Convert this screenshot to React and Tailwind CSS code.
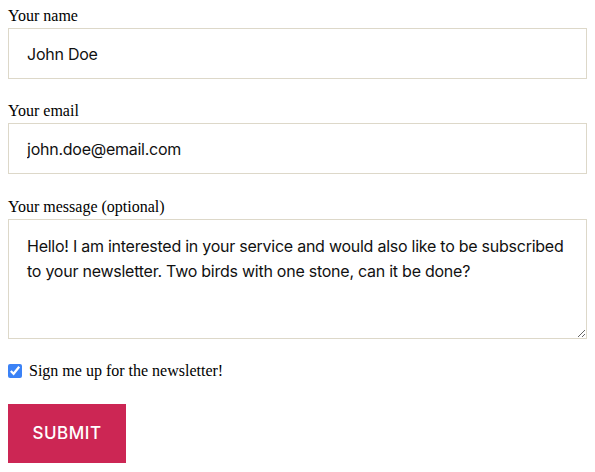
import { useState } from 'react'

const labelClass = "block font-['Liberation_Serif',serif] text-[16px] leading-[20px] text-black pt-[2px] mb-[2px]"
const fieldClass =
  "block w-full border border-[#ddd8c9] bg-white px-[18px] font-['Inter',sans-serif] text-[16px] tracking-[-0.25px] text-[#111] outline-none"

function App() {
  const [name, setName] = useState('John Doe')
  const [email, setEmail] = useState('john.doe@email.com')
  const [message, setMessage] = useState(
    'Hello! I am interested in your service and would also like to be subscribed to your newsletter. Two birds with one stone, can it be done?'
  )
  const [subscribed, setSubscribed] = useState(true)

  return (
    <form className="bg-white px-2 pt-1" onSubmit={(event) => event.preventDefault()}>
      <label className={labelClass} htmlFor="name">Your name</label>
      <input
        id="name"
        type="text"
        value={name}
        onChange={(event) => setName(event.target.value)}
        className={`${fieldClass} mb-5 h-[51px]`}
      />

      <label className={labelClass} htmlFor="email">Your email</label>
      <input
        id="email"
        type="email"
        value={email}
        onChange={(event) => setEmail(event.target.value)}
        className={`${fieldClass} mb-5 h-[51px]`}
      />

      <label className={`${labelClass} !pt-[3px]`} htmlFor="message">Your message (optional)</label>
      <textarea
        id="message"
        value={message}
        onChange={(event) => setMessage(event.target.value)}
        className={`${fieldClass} h-[120px] pt-[14px] leading-[25px]`}
      />

      <label className="mt-[22px] flex items-center gap-[7px] font-['Liberation_Serif',serif] text-[16px] leading-[20px] text-black">
        <input
          type="checkbox"
          checked={subscribed}
          onChange={(event) => setSubscribed(event.target.checked)}
          className="m-0 h-[14px] w-[14px] accent-[#3b82f6]"
        />
        Sign me up for the newsletter!
      </label>

      <button
        type="submit"
        className="mt-[23px] h-[59px] w-[118px] bg-[#cc2654] font-['Inter',sans-serif] text-[17px] font-medium uppercase tracking-[0.5px] text-white"
      >
        Submit
      </button>
    </form>
  )
}

export default App
